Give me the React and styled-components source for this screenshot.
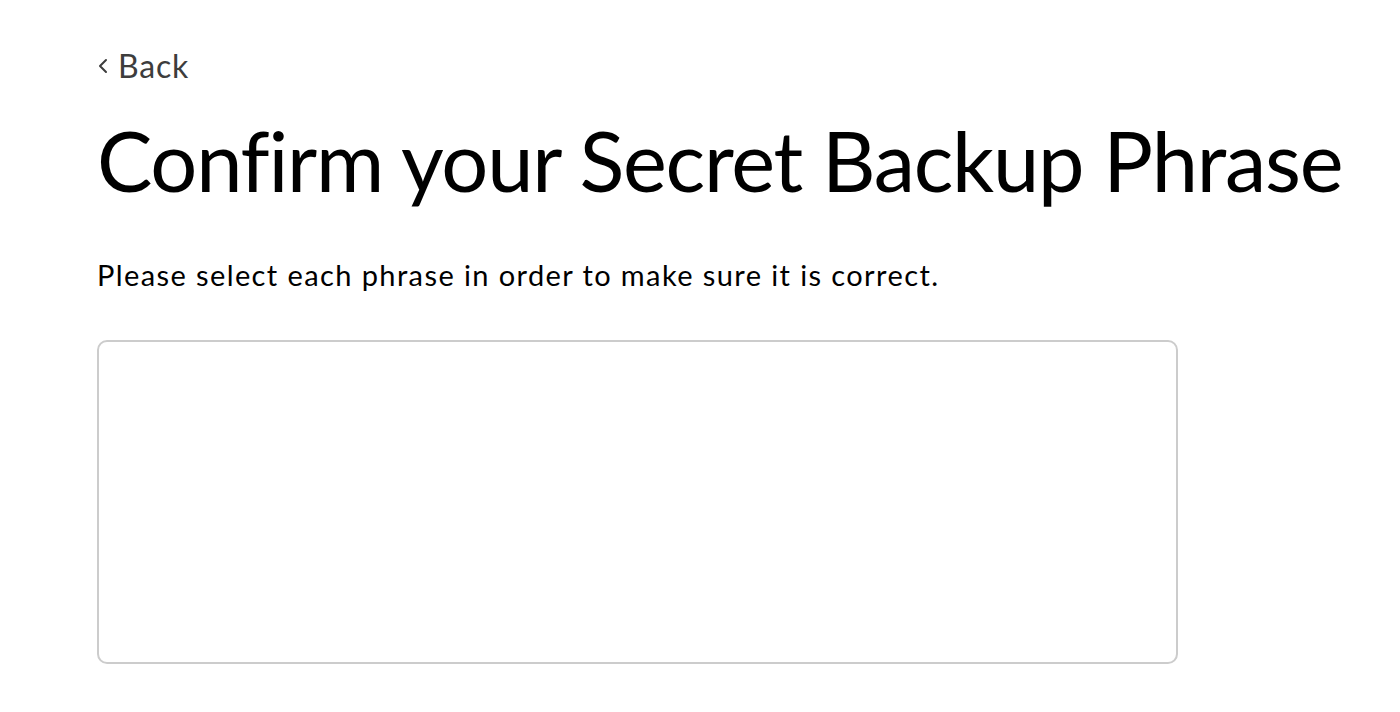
import styled, { createGlobalStyle } from "styled-components";

const GlobalStyle = createGlobalStyle`
  html, body {
    margin: 0;
    padding: 0;
    background: #ffffff;
    font-family: Lato, "Liberation Sans", sans-serif;
  }
`;

const Page = styled.div`
  display: flex;
  flex-direction: column;
  padding: 44px 0 0 97px;
  width: 1400px;
  height: 712px;
  box-sizing: border-box;
  overflow: hidden;
`;

const BackLink = styled.button`
  display: flex;
  align-items: center;
  gap: 9px;
  padding: 0;
  border: none;
  background: transparent;
  color: #3d3d3d;
  font-family: inherit;
  font-size: 32px;
  letter-spacing: 0.8px;
  line-height: 44px;
  cursor: pointer;
  align-self: flex-start;
  svg {
    width: 12px;
    height: 18px;
  }
`;

const Title = styled.h1`
  margin: 22px 0 0;
  font-size: 83px;
  font-weight: 400;
  letter-spacing: -1.25px;
  line-height: 100px;
  color: #000000;
  white-space: nowrap;
  font-variant-ligatures: none;
`;

const Subtitle = styled.p`
  margin: 45px 0 0;
  font-size: 29px;
  letter-spacing: 1.4px;
  line-height: 40px;
  color: #000000;
`;

const PhraseBox = styled.div`
  margin-top: 45px;
  width: 1081px;
  height: 324px;
  box-sizing: border-box;
  border: 2px solid #cccccc;
  border-radius: 10px;
`;

export default function App() {
  return (
    <>
      <GlobalStyle />
      <Page>
        <BackLink>
          <svg viewBox="0 0 12 18" fill="none">
            <path d="M9 3 L3 9 L9 15" stroke="#3d3d3d" strokeWidth="2" strokeLinecap="round" strokeLinejoin="round" />
          </svg>
          Back
        </BackLink>
        <Title>Confirm your Secret Backup Phrase</Title>
        <Subtitle>Please select each phrase in order to make sure it is correct.</Subtitle>
        <PhraseBox />
      </Page>
    </>
  );
}
